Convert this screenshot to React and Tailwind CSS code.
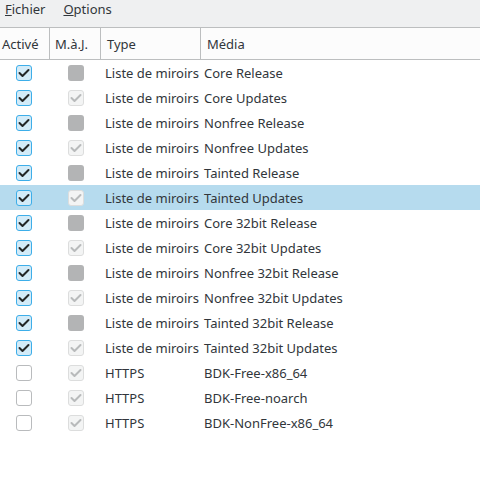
import React from "react";

const rows = [
  [true, "gray", "Liste de miroirs", "Core Release"],
  [true, "check", "Liste de miroirs", "Core Updates"],
  [true, "gray", "Liste de miroirs", "Nonfree Release"],
  [true, "check", "Liste de miroirs", "Nonfree Updates"],
  [true, "gray", "Liste de miroirs", "Tainted Release"],
  [true, "check", "Liste de miroirs", "Tainted Updates"],
  [true, "gray", "Liste de miroirs", "Core 32bit Release"],
  [true, "check", "Liste de miroirs", "Core 32bit Updates"],
  [true, "gray", "Liste de miroirs", "Nonfree 32bit Release"],
  [true, "check", "Liste de miroirs", "Nonfree 32bit Updates"],
  [true, "gray", "Liste de miroirs", "Tainted 32bit Release"],
  [true, "check", "Liste de miroirs", "Tainted 32bit Updates"],
  [false, "check", "HTTPS", "BDK-Free-x86_64"],
  [false, "check", "HTTPS", "BDK-Free-noarch"],
  [false, "check", "HTTPS", "BDK-NonFree-x86_64"],
];

function Check({ color }) {
  return (
    <svg width="12" height="10" viewBox="0 0 12 10" className="block">
      <path d="M1.5 5 L4.5 8 L10.5 2" fill="none" stroke={color} strokeWidth="2" strokeLinecap="round" strokeLinejoin="round" />
    </svg>
  );
}

function ActiveBox({ on }) {
  if (on)
    return (
      <div className="w-4 h-4 rounded-[3px] border border-[#3daee9] bg-[#d3ebf8] flex items-center justify-center">
        <Check color="#232627" />
      </div>
    );
  return <div className="w-4 h-4 rounded-[3px] border border-[#b9bbbd] bg-white" />;
}

function MajBox({ kind }) {
  if (kind === "gray") return <div className="w-4 h-4 rounded-[3px] bg-[#b3b4b5]" />;
  return (
    <div className="w-4 h-4 rounded-[3px] border border-[#dcdddd] bg-[#f3f4f4] flex items-center justify-center">
      <Check color="#b8babb" />
    </div>
  );
}

export default function App() {
  return (
    <div
      className="w-[480px] h-[488px] bg-white text-[13px] text-[#31363b] overflow-hidden"
      style={{ fontFamily: "'Noto Sans', sans-serif" }}
    >
      <div className="h-[27px] bg-[#eff0f1] flex items-start gap-[18px] px-[5px] border-b border-[#bcbebf] box-content">
        <span><span className="underline">F</span>ichier</span>
        <span><span className="underline">O</span>ptions</span>
      </div>
      <div className="h-[31px] bg-[#fcfcfc] border-b border-[#bcbebf] box-content flex items-center">
        <div className="w-[50px] h-full border-r border-[#bcbebf] flex items-center pl-[2px] pt-[2px]">Activé</div>
        <div className="w-[51px] h-full border-r border-[#bcbebf] flex items-center pl-[5px] pt-[2px]">M.à.J.</div>
        <div className="w-[100px] h-full border-r border-[#bcbebf] flex items-center pl-[6px] pt-[2px]">Type</div>
        <div className="flex-1 h-full flex items-center pl-[6px] pt-[2px]">Média</div>
      </div>
      <div>
        {rows.map(([a, m, t, d], i) => (
          <div key={i} className={"h-[25px] flex items-center " + (i === 5 ? "bg-[#b6dbee]" : "")}>
            <div className="w-[50px] flex justify-center pr-[3px]"><ActiveBox on={a} /></div>
            <div className="w-[51px] flex justify-center"><MajBox kind={m} /></div>
            <div className="w-[100px] pl-[4px] pt-[2px] whitespace-nowrap">{t}</div>
            <div className="flex-1 pl-[3px] pt-[2px] whitespace-nowrap">{d}</div>
          </div>
        ))}
      </div>
    </div>
  );
}
